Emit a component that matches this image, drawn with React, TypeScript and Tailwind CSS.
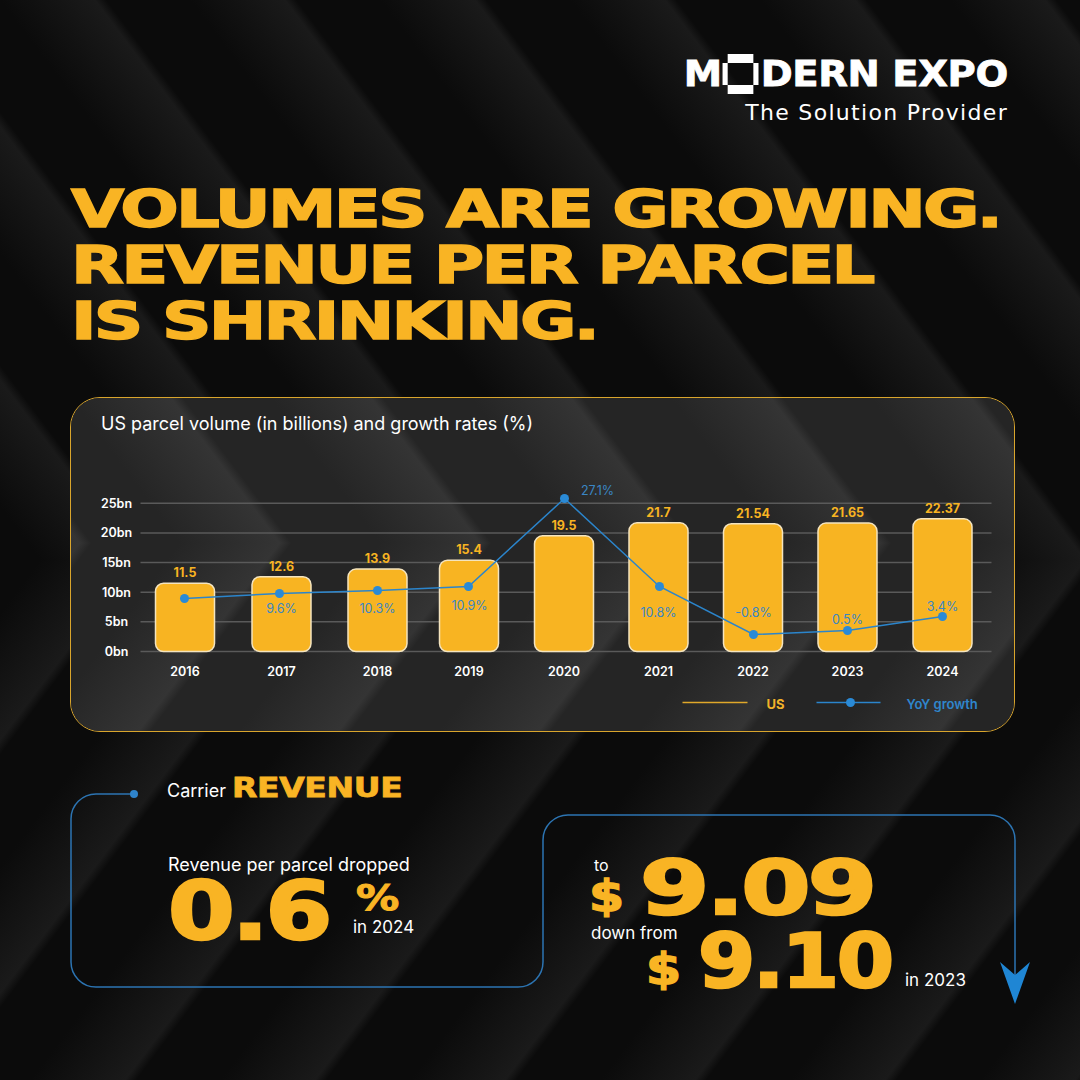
import React from "react";

const K = 0.75;

function Stripes({
  w,
  h,
  apex,
  pitch,
  light,
  dark,
  id,
}: {
  w: number;
  h: number;
  apex: number;
  pitch: number;
  light: string;
  dark: string;
  id: string;
}) {
  const d = 1 + K * K;
  const vx = pitch / d;
  const vy = (K * pitch) / d;
  const stops = (
    <>
      <stop offset="0" stopColor={dark} />
      <stop offset="0.5" stopColor={light} />
      <stop offset="0.56" stopColor={dark} />
      <stop offset="1" stopColor={dark} />
    </>
  );
  return (
    <svg
      className="absolute left-0 top-0 pointer-events-none"
      width={w}
      height={h}
      viewBox={`0 0 ${w} ${h}`}
    >
      <defs>
        <linearGradient
          id={`${id}t`}
          gradientUnits="userSpaceOnUse"
          spreadMethod="repeat"
          x1={0}
          y1={0}
          x2={vx}
          y2={-vy}
        >
          {stops}
        </linearGradient>
        <linearGradient
          id={`${id}b`}
          gradientUnits="userSpaceOnUse"
          spreadMethod="repeat"
          x1={K * apex}
          y1={apex}
          x2={K * apex + vx}
          y2={apex + vy}
        >
          {stops}
        </linearGradient>
      </defs>
      <rect x={0} y={0} width={w} height={apex} fill={`url(#${id}t)`} />
      <rect x={0} y={apex} width={w} height={h - apex} fill={`url(#${id}b)`} />
    </svg>
  );
}

function LogoO() {
  return (
    <svg width="34" height="40" viewBox="0 0 34 40" className="shrink-0">
      <rect x="0" y="9" width="5" height="22" fill="#fff" />
      <rect x="5" y="0" width="24" height="9" fill="#fff" />
      <rect x="29" y="9" width="5" height="22" fill="#fff" />
      <rect x="5" y="31" width="24" height="9" fill="#fff" />
    </svg>
  );
}

const years = ["2016", "2017", "2018", "2019", "2020", "2021", "2022", "2023", "2024"];
const cxs = [185.5, 282, 378, 469.5, 564.5, 659, 753.5, 848, 943];
const vals = [11.5, 12.6, 13.9, 15.4, 19.5, 21.7, 21.54, 21.65, 22.37];
const valLabels = ["11.5", "12.6", "13.9", "15.4", "19.5", "21.7", "21.54", "21.65", "22.37"];
const pts: [number, number][] = [
  [185, 599],
  [280, 594],
  [378, 591],
  [469, 587],
  [565, 499],
  [660, 587],
  [754, 635],
  [848, 631],
  [943, 617],
];
const pcts: [string, number, number][] = [
  ["9.6%", 282, 609],
  ["10.3%", 378, 609],
  ["10.9%", 470, 606],
  ["27.1%", 598, 491],
  ["10.8%", 659, 613],
  ["-0.8%", 754, 613],
  ["0.5%", 848, 620],
  ["3.4%", 943, 607],
];
const grid: [string, number][] = [
  ["25bn", 25],
  ["20bn", 20],
  ["15bn", 15],
  ["10bn", 10],
  ["5bn", 5],
  ["0bn", 0],
];

const yOf = (v: number) => 652 - v * 5.93;

function Chart() {
  const font = "Inter, 'Noto Sans', sans-serif";
  return (
    <svg width="942" height="291" viewBox="71.5 440.5 942 291" className="block relative">
      {grid.map(([l, v]) => (
        <g key={l}>
          <line x1={141} x2={992} y1={yOf(v)} y2={yOf(v)} stroke="#5a5a5a" strokeWidth={1.5} />
          <text
            x={117}
            y={yOf(v) + 4.5}
            textAnchor="middle"
            fill="#ffffff"
            fontSize={12.5}
            fontWeight={600}
            fontFamily={font}
          >
            {l}
          </text>
        </g>
      ))}
      {cxs.map((cx, i) => {
        const top = yOf(vals[i]);
        return (
          <g key={years[i]}>
            <rect
              x={cx - 29.5}
              y={top}
              width={59}
              height={652 - top}
              rx={8}
              fill="#f8b422"
              stroke="#f4e4bf"
              strokeWidth={1.5}
            />
            <text
              x={cx}
              y={top - 6}
              textAnchor="middle"
              fill="#f8b422"
              fontSize={12.5}
              fontWeight={700}
              fontFamily={font}
            >
              {valLabels[i]}
            </text>
            <text
              x={cx}
              y={676}
              textAnchor="middle"
              fill="#ffffff"
              fontSize={12.5}
              fontWeight={600}
              fontFamily={font}
            >
              {years[i]}
            </text>
          </g>
        );
      })}
      <polyline
        points={pts.map((p) => p.join(",")).join(" ")}
        fill="none"
        stroke="#2b85cc"
        strokeWidth={1.5}
      />
      {pts.map((p, i) => (
        <circle key={i} cx={p[0]} cy={p[1]} r={4.5} fill="#2a8ad6" />
      ))}
      {pcts.map(([l, x, y]) => (
        <text
          key={l}
          x={x}
          y={y + 4.5}
          textAnchor="middle"
          fill="#3a86c4"
          fontSize={12.5}
          fontWeight={400}
          fontFamily={font}
        >
          {l}
        </text>
      ))}
      <line x1={683} x2={748} y1={703} y2={703} stroke="#e0a82a" strokeWidth={1.5} />
      <text x={767} y={709.5} fill="#f0b22a" fontSize={13} fontWeight={700} fontFamily={font}>
        US
      </text>
      <line x1={817} x2={881} y1={703} y2={703} stroke="#2b85cc" strokeWidth={1.5} />
      <circle cx={851} cy={703} r={4.5} fill="#2a8ad6" />
      <text x={907} y={709.5} fill="#2f86cc" fontSize={13} fontWeight={600} fontFamily={font}>
        YoY growth
      </text>
    </svg>
  );
}

function Connector() {
  return (
    <svg
      className="absolute left-0 top-0 pointer-events-none"
      width="1080"
      height="1080"
      viewBox="0 0 1080 1080"
    >
      <path
        d="M134 794 H96 A25 25 0 0 0 71 819 V962 A25 25 0 0 0 96 987 H518 A25 25 0 0 0 543 962 V840 A25 25 0 0 1 568 815 H990 A25 25 0 0 1 1015 840 V975"
        fill="none"
        stroke="#2c74b2"
        strokeWidth={1.5}
      />
      <circle cx={134} cy={794} r={4} fill="#2f84cc" />
      <polygon points="1000,962 1015,975 1030,962 1015,1004" fill="#1f86d4" />
    </svg>
  );
}

export default function App() {
  return (
    <div className="relative w-[1080px] h-[1080px] overflow-hidden bg-[#0c0c0c] text-white [font-family:Inter,'Noto_Sans',sans-serif]">
      <Stripes w={1080} h={1080} apex={560} pitch={190} light="#1a1a1a" dark="#0b0b0b" id="pg" />
      <Connector />
      <div className="relative flex flex-col">
        <header className="flex justify-end pr-[72px] pt-[53px]">
          <div className="flex flex-col items-end">
            <div className="flex items-center h-[42px] origin-right scale-x-[1.07] text-white [font-family:'DejaVu_Sans',sans-serif] font-bold text-[36px] leading-none [-webkit-text-stroke:0.8px_#ffffff]">
              <span>M</span>
              <LogoO />
              <span className="ml-[2px] tracking-[-0.01em]">DERN EXPO</span>
            </div>
            <div className="mt-[5px] text-[22px] leading-[26px] tracking-[0.06em] text-white [font-family:'DejaVu_Sans',sans-serif]">
              The Solution Provider
            </div>
          </div>
        </header>

        <h1 className="mt-[56px] ml-[71px] w-fit whitespace-nowrap origin-left scale-x-[1.35] tracking-[-0.04em] [font-family:'DejaVu_Sans',sans-serif] font-bold text-[51px] leading-[56px] text-[#f9b424] [-webkit-text-stroke:1.5px_#f9b424]">
          VOLUMES ARE GROWING.
          <br />
          REVENUE PER PARCEL
          <br />
          IS SHRINKING.
        </h1>

        <section className="relative mt-[47px] ml-[70px] w-[945px] rounded-[30px] border-[1.5px] border-[#d9a52c] overflow-hidden bg-[#262626]">
          <Stripes w={945} h={340} apex={145} pitch={200} light="#343434" dark="#252525" id="pn" />
          <div className="relative h-[42px] pl-[30px] pt-[14px] text-[18px] leading-[24px] text-white">
            US parcel volume (in billions) and growth rates (%)
          </div>
          <Chart />
        </section>

        <div className="mt-[42px] ml-[167px] flex items-baseline">
          <span className="text-[18px] leading-none text-white">Carrier</span>
          <span className="ml-[6px] inline-block origin-left scale-x-[1.22] tracking-[-0.01em] [font-family:'DejaVu_Sans',sans-serif] font-bold text-[27px] leading-none text-[#f9b424] [-webkit-text-stroke:0.8px_#f9b424]">
            REVENUE
          </span>
        </div>

        <div className="mt-[53px] flex items-start">
          <div className="ml-[168px] w-[420px] flex flex-col">
            <div className="text-[18px] leading-[22px] text-white">Revenue per parcel dropped</div>
            <div className="mt-[4px] flex items-start">
              <div className="w-[185px]">
                <span className="inline-block origin-left scale-x-[1.2] tracking-[-0.03em] [font-family:'DejaVu_Sans',sans-serif] font-bold text-[80px] leading-[64px] text-[#f9b424] [-webkit-text-stroke:2.5px_#f9b424]">
                  0.6
                </span>
              </div>
              <div className="flex flex-col items-start">
                <span className="mt-[4px] ml-[3px] inline-block origin-left scale-x-[1.2] [font-family:'DejaVu_Sans',sans-serif] font-bold text-[36px] leading-[28px] text-[#f9b424] [-webkit-text-stroke:1px_#f9b424]">
                  %
                </span>
                <span className="mt-[5px] text-[17px] leading-[20px] text-white">in 2024</span>
              </div>
            </div>
          </div>

          <div className="pt-[1px] flex flex-col">
            <div className="flex items-start">
              <div className="w-[52px] flex flex-col items-start">
                <span className="ml-[6px] text-[16px] leading-[20px] text-white">to</span>
                <span className="mt-[5px] ml-[1px] inline-block origin-left scale-x-[1.2] [font-family:'DejaVu_Sans',sans-serif] font-bold text-[42px] leading-[34px] text-[#f9b424] [-webkit-text-stroke:1.5px_#f9b424]">
                  $
                </span>
              </div>
              <span className="mt-[3px] inline-block origin-left scale-x-[1.33] tracking-[-0.03em] [font-family:'DejaVu_Sans',sans-serif] font-bold text-[75px] leading-[60px] text-[#f9b424] [-webkit-text-stroke:2.5px_#f9b424]">
                9.09
              </span>
            </div>
            <div className="mt-[5px] flex items-start">
              <div className="w-[110px] flex flex-col items-start">
                <span className="ml-[3px] text-[17px] leading-[20px] text-white">down from</span>
                <span className="mt-[10px] ml-[58px] inline-block origin-left scale-x-[1.2] [font-family:'DejaVu_Sans',sans-serif] font-bold text-[42px] leading-[34px] text-[#f9b424] [-webkit-text-stroke:1.5px_#f9b424]">
                  $
                </span>
              </div>
              <div className="mt-[8px] w-[207px]">
                <span className="inline-block origin-left scale-x-[1.1] tracking-[-0.03em] [font-family:'DejaVu_Sans',sans-serif] font-bold text-[75px] leading-[60px] text-[#f9b424] [-webkit-text-stroke:2.5px_#f9b424]">
                  9.10
                </span>
              </div>
              <span className="self-end mb-[3px] text-[17px] leading-[20px] text-white">in 2023</span>
            </div>
          </div>
        </div>
      </div>
    </div>
  );
}
